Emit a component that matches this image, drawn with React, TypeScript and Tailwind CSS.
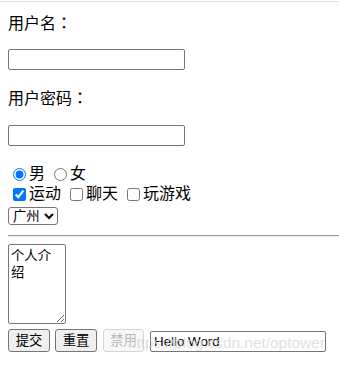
export default function App() {
  return (
    <div className="relative w-[339px] h-[367px] bg-white text-black overflow-hidden font-['Liberation_Sans','Noto_Sans_CJK_SC',sans-serif]">
      {/* 顶部细线 */}
      <div className="mt-px h-px bg-[#e3e3e3]" />

      <form className="flex flex-col items-start px-2" onSubmit={(e) => e.preventDefault()}>
        <div className="mt-[10px] h-[20px] leading-[20px] text-[16px]">
          用户名<span className="font-['Noto_Sans_CJK_TC',sans-serif]">：</span>
        </div>
        <input
          type="text"
          className="mt-[17px] w-[177px] h-[21px] border border-[#767676] rounded-[2px] px-[2px] text-[13.33px]"
        />

        <div className="mt-[17px] h-[20px] leading-[20px] text-[16px]">
          用户密码<span className="font-['Noto_Sans_CJK_TC',sans-serif]">：</span>
        </div>
        <input
          type="password"
          className="mt-[18px] w-[177px] h-[21px] border border-[#767676] rounded-[2px] px-[2px] text-[13.33px]"
        />

        {/* 性别 */}
        <div className="mt-[18px] h-[20px] flex items-center text-[16px]">
          <input type="radio" name="sex" defaultChecked className="ml-[5px] mr-[3px] w-[13px] h-[13px]" />
          <span>男</span>
          <input type="radio" name="sex" className="ml-[9px] mr-[3px] w-[13px] h-[13px]" />
          <span>女</span>
        </div>

        {/* 爱好 */}
        <div className="h-[20px] flex items-center text-[16px]">
          <input type="checkbox" defaultChecked className="ml-[5px] mr-[3px] w-[13px] h-[13px]" />
          <span>运动</span>
          <input type="checkbox" className="ml-[9px] mr-[3px] w-[13px] h-[13px]" />
          <span>聊天</span>
          <input type="checkbox" className="ml-[9px] mr-[3px] w-[13px] h-[13px]" />
          <span>玩游戏</span>
        </div>

        <select className="mt-[3px] w-[50px] h-[18px] border border-[#767676] rounded-[3px] text-[13.33px] leading-none">
          <option>广州</option>
          <option>深圳</option>
          <option>北京</option>
        </select>

        <div className="mt-[10px] w-[calc(100%+8px)] border-t border-t-[#9a9a9a] border-b border-b-[#eeeeee]" />

        <textarea
          defaultValue="个人介绍"
          className="mt-[7px] w-[58px] h-[80px] border border-[#767676] rounded-[2px] p-[2px] text-[13.33px] leading-[17px]"
        />

        <div className="mt-[5px] flex items-end">
          <button
            type="submit"
            className="w-[42px] h-[23px] bg-[#efefef] border border-[#767676] rounded-[3px] text-[13.33px] leading-none"
          >
            提交
          </button>
          <button
            type="reset"
            className="ml-[5px] w-[42px] h-[23px] bg-[#efefef] border border-[#767676] rounded-[3px] text-[13.33px] leading-none"
          >
            重置
          </button>
          <button
            type="button"
            disabled
            className="ml-[6px] w-[41px] h-[23px] bg-[#f8f8f8] border border-[#d6d6d6] rounded-[3px] text-[13.33px] leading-none text-[#b4b4b4]"
          >
            禁用
          </button>
          <input
            type="text"
            defaultValue="Hello Word"
            className="ml-[6px] w-[176px] h-[21px] border border-[#767676] rounded-[2px] px-[3px] text-[13.33px]"
          />
        </div>
      </form>

      {/* 水印 */}
      <div className="absolute left-[128px] top-[333px] text-[15.4px] leading-[20px] text-[#d8d8d8]/80 pointer-events-none select-none">
        https://blog.csdn.net/optower
      </div>
    </div>
  );
}
